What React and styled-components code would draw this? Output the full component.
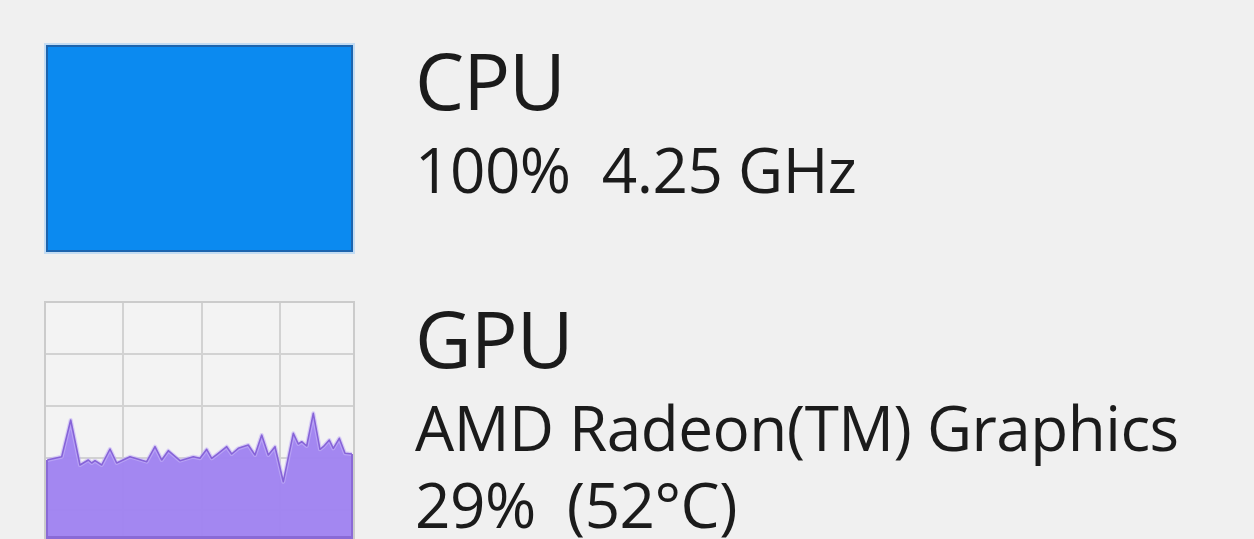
import React from "react";
import styled, { createGlobalStyle } from "styled-components";

const Global = createGlobalStyle`
  html, body { margin: 0; padding: 0; background: #f0f0f0; }
  body { font-family: "Open Sans", "Noto Sans", sans-serif; color: #1b1b1b; overflow: hidden; }
`;

const Page = styled.div`
  width: 1254px;
  height: 539px;
  box-sizing: border-box;
  padding: 43px 0 0 44px;
  display: flex;
  flex-direction: column;
  gap: 47px;
  overflow: hidden;
`;

const Row = styled.div`
  display: flex;
  align-items: flex-start;
  gap: 60px;
`;

const CpuTile = styled.div`
  box-sizing: border-box;
  width: 311px;
  height: 211px;
  flex: none;
  border: 2px solid #c3dcf3;
  background: #0b8af0;
  box-shadow: inset 0 0 0 2px #1d64ad;
`;

const ChartTile = styled.div`
  box-sizing: border-box;
  width: 311px;
  height: 240px;
  flex: none;
  border: 2px solid #cbcbcb;
  background: #f3f3f3;
  position: relative;
  overflow: hidden;
`;

const TextCol = styled.div`
  display: flex;
  flex-direction: column;
  margin-top: -5px;
`;

const Title = styled.div`
  font-size: 78px;
  line-height: 84px;
  height: 84px;
  letter-spacing: -1px;
`;

const Sub = styled.div`
  font-size: 62px;
  line-height: 77px;
  white-space: nowrap;
  letter-spacing: -0.5px;
  margin-top: ${(p) => (p.$first ? "9px" : "0")};
`;

const pts = [
  [47.3, 460], [61.7, 456.7], [70.7, 420], [80, 465], [88.3, 460], [91.7, 463],
  [95, 460.7], [101.7, 465], [110, 449], [116.7, 463], [130, 456.7], [146.7, 461.7],
  [155, 446.7], [161.7, 460], [168.3, 450.7], [180, 460.7], [193.3, 456.7],
  [200, 458.3], [206.7, 449.3], [211.7, 458.3], [218.3, 453.3], [226.7, 446.7],
  [231.7, 454], [238.3, 448.3], [248.3, 445], [255, 455], [261.7, 435],
  [268.3, 455], [275, 446.7], [283.3, 481.7], [293.3, 433.3], [298.3, 444],
  [301.7, 441.7], [306.7, 446], [313.3, 413.3], [320, 449.3], [323.3, 446.7],
  [329.3, 440], [333.3, 448.3], [339.3, 438.3], [345, 453.3], [352, 454],
].map(([x, y]) => [x - 46, y - 303]);

function GpuChart() {
  const line = pts.map(([x, y]) => `${x.toFixed(1)},${y.toFixed(1)}`).join(" ");
  const area = `M0,${pts[0][1]} L${line} L307,${pts[pts.length - 1][1]} L307,240 L0,240 Z`;
  const vx = [76, 155, 233];
  const hy = [50, 102, 154, 206];
  return (
    <svg width="307" height="236" viewBox="0 0 307 236" style={{ display: "block" }}>
      {vx.map((x) => (
        <rect key={"v" + x} x={x} y={0} width={2} height={236} fill="#d2d2d2" />
      ))}
      {hy.map((y) => (
        <rect key={"h" + y} x={0} y={y} width={307} height={2} fill="#d2d2d2" />
      ))}
      <path d={area} fill="#a083f1" fillOpacity="0.97" />
      <polyline points={line} fill="none" stroke="#c4b3f6" strokeWidth="4" strokeLinejoin="round" opacity="0.6" />
      <polyline points={line} fill="none" stroke="#8663d8" strokeWidth="1.6" strokeLinejoin="round" />
      <rect x="0" y="233" width="307" height="3" fill="#8a6ad6" />
      <rect x="0" y={pts[0][1]} width="2" height="236" fill="#8a6ad6" />
      <rect x="305" y={pts[pts.length - 1][1]} width="2" height="236" fill="#8a6ad6" />
    </svg>
  );
}

export default function App() {
  return (
    <>
      <Global />
      <Page>
        <Row>
          <CpuTile />
          <TextCol>
            <Title>CPU</Title>
            <Sub $first>100%&nbsp; 4.25 GHz</Sub>
          </TextCol>
        </Row>
        <Row>
          <ChartTile>
            <GpuChart />
          </ChartTile>
          <TextCol>
            <Title>GPU</Title>
            <Sub $first>AMD Radeon(TM) Graphics</Sub>
            <Sub>29%&nbsp; (52°C)</Sub>
          </TextCol>
        </Row>
      </Page>
    </>
  );
}
